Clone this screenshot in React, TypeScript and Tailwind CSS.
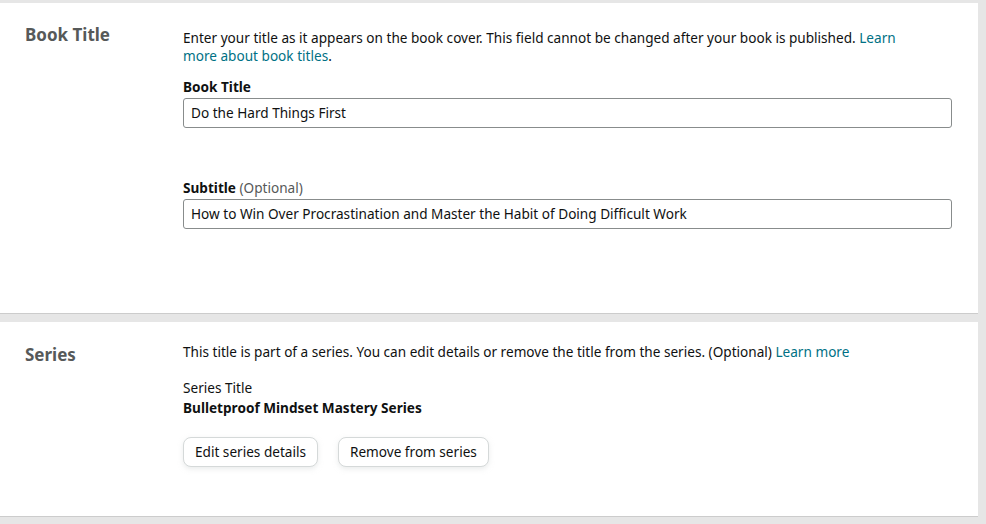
export default function App() {
  const font = { fontFamily: '"Noto Sans", Arial, sans-serif' }
  return (
    <div className="w-[986px] h-[524px] bg-[#e6e6e6] pt-[3px] pr-2 text-[#0f1111] text-[13.6px] leading-[18px]" style={font}>
      <section className="bg-white border-b border-[#cccccc] h-[311px] flex">
        <h2 className="w-[183px] pl-[25px] pt-[23px] text-[17px] font-bold text-[#565959]">Book Title</h2>
        <div className="flex-1 pr-[26px] pt-[26px]">
          <p className="pr-[20px]">
            Enter your title as it appears on the book cover. This field cannot be changed after your book is published.{' '}
            <a className="text-[#007185]">Learn more about book titles</a>.
          </p>
          <label className="block font-bold mt-[13px] mb-[2px]">Book Title</label>
          <div className="h-[30px] border border-[#888c8c] rounded-[3px] px-[7px] flex items-center">Do the Hard Things First</div>
          <label className="block font-bold mt-[51px] mb-[2px]">
            Subtitle <span className="font-normal text-[#565959]">(Optional)</span>
          </label>
          <div className="h-[30px] border border-[#888c8c] rounded-[3px] px-[7px] flex items-center">
            How to Win Over Procrastination and Master the Habit of Doing Difficult Work
          </div>
        </div>
      </section>
      <section className="bg-white border-b border-[#cccccc] h-[195px] mt-[8px] flex">
        <h2 className="w-[183px] pl-[25px] pt-[24px] text-[17px] font-bold text-[#565959]">Series</h2>
        <div className="flex-1 pt-[21px]">
          <p>
            This title is part of a series. You can edit details or remove the title from the series. (Optional){' '}
            <a className="text-[#007185]">Learn more</a>
          </p>
          <p className="mt-[18px]">Series Title</p>
          <p className="font-bold mt-[2px]">Bulletproof Mindset Mastery Series</p>
          <div className="flex gap-[20px] mt-[20px]">
            <button className="h-[30px] px-[11px] border border-[#d5d9d9] rounded-[8px] bg-white shadow-[0_2px_5px_rgba(213,217,217,0.5)]">Edit series details</button>
            <button className="h-[30px] px-[11px] border border-[#d5d9d9] rounded-[8px] bg-white shadow-[0_2px_5px_rgba(213,217,217,0.5)]">Remove from series</button>
          </div>
        </div>
      </section>
    </div>
  )
}
